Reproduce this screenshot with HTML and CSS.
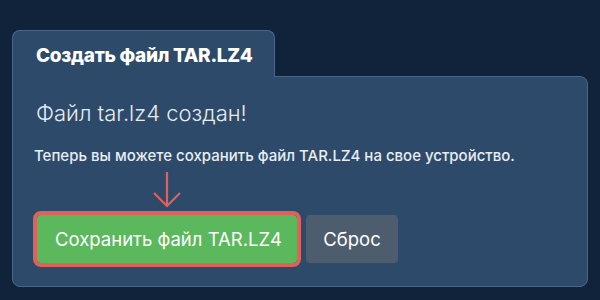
FILE: index.html
```html
<!DOCTYPE html>
<html lang="ru">
<head>
<meta charset="utf-8">
<link rel="stylesheet" href="styles.css">
</head>
<body>
<div class="panel">
  <div class="tabs">
    <div class="tab">Создать файл TAR.LZ4</div>
  </div>
  <div class="card">
    <h2 class="status">Файл tar.lz4 создан!</h2>
    <p class="note">Теперь вы можете сохранить файл TAR.LZ4 на свое устройство.</p>
    <div class="actions">
      <div class="save-wrap">
        <svg class="arrow" width="30" height="36" viewBox="0 0 30 36" aria-hidden="true">
          <path d="M15 0 V34 M2 21 L15 34 L28 21" fill="none" stroke="#e0605a" stroke-width="2.2"/>
        </svg>
        <button class="btn btn-save">Сохранить файл TAR.LZ4</button>
      </div>
      <button class="btn btn-reset">Сброс</button>
    </div>
  </div>
</div>
</body>
</html>
```
FILE: styles.css
```css
html, body {
  margin: 0;
  padding: 0;
}
body {
  background: #10233a;
  width: 600px;
  height: 300px;
  overflow: hidden;
  font-family: Inter, "Noto Sans", sans-serif;
  color: #ffffff;
}
.panel {
  padding: 30px 0 0 12px;
  width: 576px;
}
.tabs {
  display: flex;
  position: relative;
  z-index: 1;
  margin-bottom: -1px;
}
.tab {
  width: 263px;
  height: 47px;
  box-sizing: border-box;
  padding: 14px 0 0 23px;
  background: #2d4a6b;
  border: 1px solid #4b6687;
  border-bottom: none;
  border-radius: 8px 8px 0 0;
  font-weight: 800;
  font-size: 19px;
  letter-spacing: -0.3px;
  line-height: 22px;
  white-space: nowrap;
}
.card {
  width: 576px;
  height: 211px;
  box-sizing: border-box;
  background: #2d4a6b;
  border: 1px solid #4b6687;
  border-radius: 0 8px 8px 8px;
  padding: 23px 0 0 23px;
  white-space: nowrap;
}
.status {
  margin: 0;
  font-weight: 300;
  font-size: 22px;
  line-height: 26px;
  color: #e6ebf1;
}
.note {
  margin: 21px 0 0 -2px;
  font-size: 15px;
  font-weight: 500;
  line-height: 18px;
  color: #e8edf3;
}
.actions {
  display: flex;
  align-items: flex-start;
  gap: 9px;
  margin: 7px 0 0 1px;
}
.save-wrap {
  display: flex;
  flex-direction: column;
  align-items: center;
}
.arrow {
  display: block;
  margin-bottom: 3px;
}
.btn {
  font-family: Inter, "Noto Sans", sans-serif;
  font-size: 18.5px;
  font-weight: 400;
  color: #ffffff;
  height: 48px;
  border-radius: 4px;
  border: none;
  padding: 0 18px;
  white-space: nowrap;
}
.btn-save {
  background: #5cb85c;
  width: 260px;
  outline: 4px solid #e0605a;
  outline-offset: 0;
  margin-top: 4px;
}
.btn-reset {
  background: #4d5d6e;
  width: 92px;
  margin-top: 43px;
  padding: 0 16px;
}
```
